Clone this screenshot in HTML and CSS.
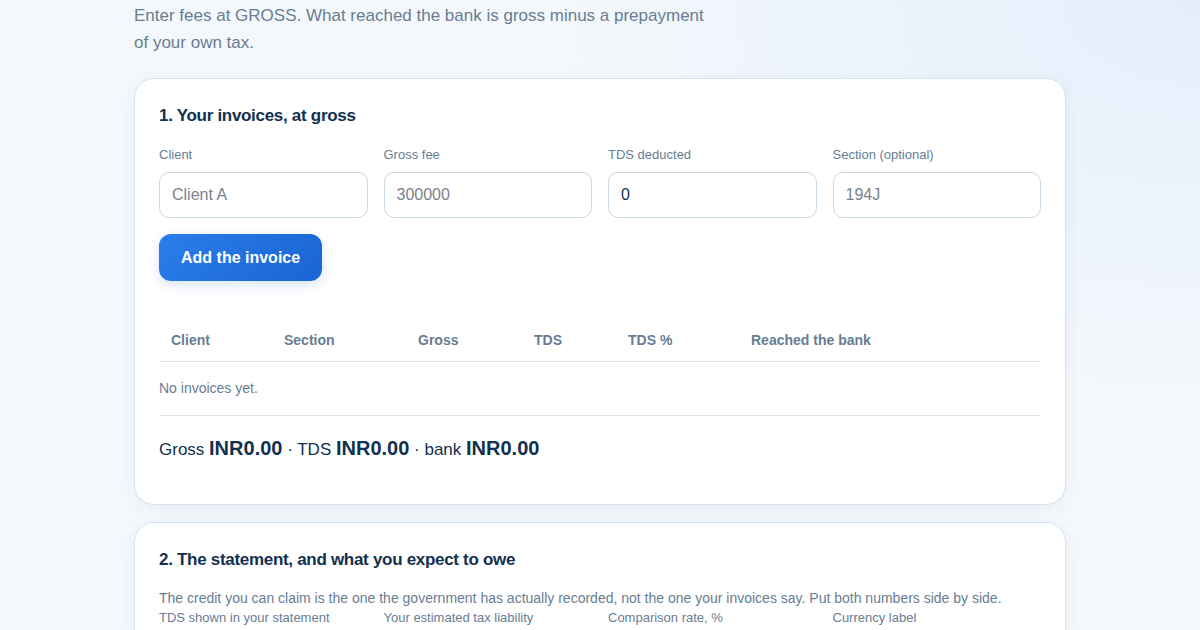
FILE: index.html
```html
<!DOCTYPE html>
<html lang="en">
<head>
<meta charset="utf-8">
<title>TDS invoices</title>
<link rel="stylesheet" href="styles.css">
</head>
<body>
<main class="page">
  <p class="intro">Enter fees at GROSS. What reached the bank is gross minus a prepayment of your own tax.</p>

  <section class="card">
    <h2 class="card-title">1. Your invoices, at gross</h2>
    <div class="fields">
      <label class="field"><span class="label">Client</span><input class="input" type="text" placeholder="Client A"></label>
      <label class="field"><span class="label">Gross fee</span><input class="input" type="text" placeholder="300000"></label>
      <label class="field"><span class="label">TDS deducted</span><input class="input" type="text" value="0"></label>
      <label class="field"><span class="label">Section (optional)</span><input class="input" type="text" placeholder="194J"></label>
    </div>
    <button class="btn" type="button">Add the invoice</button>

    <table class="table">
      <thead>
        <tr>
          <th class="c1">Client</th>
          <th class="c2">Section</th>
          <th class="c3">Gross</th>
          <th class="c4">TDS</th>
          <th class="c5">TDS %</th>
          <th>Reached the bank</th>
        </tr>
      </thead>
    </table>
    <p class="empty">No invoices yet.</p>
    <p class="totals">Gross <strong>INR0.00</strong> · TDS <strong>INR0.00</strong> · bank <strong>INR0.00</strong></p>
  </section>

  <section class="card">
    <h2 class="card-title">2. The statement, and what you expect to owe</h2>
    <p class="note">The credit you can claim is the one the government has actually recorded, not the one your invoices say. Put both numbers side by side.</p>
    <div class="fields fields-tight">
      <label class="field"><span class="label">TDS shown in your statement</span></label>
      <label class="field"><span class="label">Your estimated tax liability</span></label>
      <label class="field"><span class="label">Comparison rate, %</span></label>
      <label class="field"><span class="label">Currency label</span></label>
    </div>
  </section>
</main>
</body>
</html>
```

FILE: styles.css
```css
* { box-sizing: border-box; }

html, body {
  margin: 0;
  padding: 0;
  height: 100%;
}

body {
  font-family: "Liberation Sans", Arial, sans-serif;
  color: #12304f;
  background: radial-gradient(ellipse 650px 400px at 1200px 0px, #e4eefb 0%, rgba(228,238,251,0) 100%), #f4f8fc;
  overflow: hidden;
}

.page {
  width: 932px;
  margin: 0 auto;
  padding-top: 2px;
}

.intro {
  margin: 0 0 22px;
  max-width: 580px;
  font-size: 17px;
  line-height: 27px;
  color: #687d92;
}

.card {
  background: #ffffff;
  border: 1px solid #d3e2ec;
  border-radius: 20px;
  padding: 25px 24px 24px;
  margin-bottom: 17px;
  box-shadow: 0 4px 16px rgba(30, 70, 120, 0.06);
}

.card-title {
  margin: 0;
  font-size: 17px;
  line-height: 24px;
  font-weight: 700;
  color: #12304f;
  letter-spacing: -0.3px;
}

.fields {
  display: grid;
  grid-template-columns: repeat(4, 1fr);
  gap: 16px;
  margin-top: 19px;
}

.field {
  display: flex;
  flex-direction: column;
  gap: 9px;
}

.label {
  font-size: 13px;
  line-height: 16px;
  color: #687d92;
}

.input {
  width: 100%;
  height: 46px;
  border: 1px solid #c6d8e4;
  border-radius: 10px;
  padding: 0 12px;
  font-family: "Liberation Sans", Arial, sans-serif;
  font-size: 16px;
  color: #12304f;
  background: #fff;
  outline: none;
}

.input::placeholder { color: #7a828a; }

.btn {
  display: block;
  margin-top: 16px;
  height: 47px;
  padding: 0 22px;
  border: none;
  border-radius: 12px;
  background: linear-gradient(135deg, #2a7eea 0%, #1a64d4 100%);
  color: #fff;
  font-family: "Liberation Sans", Arial, sans-serif;
  font-size: 16px;
  font-weight: 700;
  box-shadow: 0 4px 12px rgba(30, 100, 210, 0.18);
}

.table {
  width: 100%;
  margin-top: 39px;
  border-collapse: collapse;
}

.table th {
  text-align: left;
  padding: 12px 12px;
  font-size: 14px;
  line-height: 17px;
  font-weight: 700;
  color: #687d92;
  border-bottom: 1px solid #dbe4ec;
}

.c1 { width: 113px; }
.c2 { width: 134px; }
.c3 { width: 116px; }
.c4 { width: 94px; }
.c5 { width: 123px; }

.empty {
  margin: 0;
  padding: 18px 0;
  font-size: 14px;
  line-height: 17px;
  color: #687d92;
  border-bottom: 1px solid #dbe4ec;
}

.totals {
  margin: 20px 0 18px;
  font-size: 17px;
  line-height: 24px;
  color: #12304f;
}

.totals strong {
  font-size: 20px;
  font-weight: 700;
}

.note {
  margin: 16px 0 0;
  font-size: 14px;
  line-height: 20px;
  color: #687d92;
}

.fields-tight {
  margin-top: 2px;
}
```
